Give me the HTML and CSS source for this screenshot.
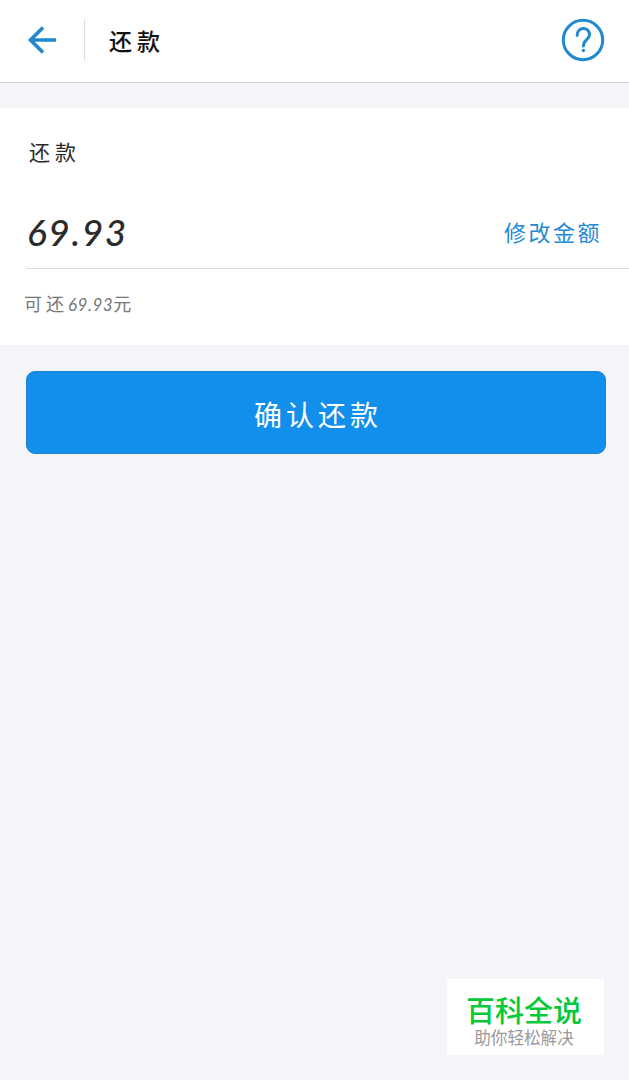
FILE: index.html
```html
<!DOCTYPE html>
<html lang="zh-CN">
<head>
<meta charset="utf-8">
<meta name="viewport" content="width=device-width, initial-scale=1">
<title>还款</title>
<link rel="stylesheet" href="styles.css">
</head>
<body>

<div class="header">
  <a class="back" href="#">
    <svg width="30" height="30" viewBox="0 0 30 30">
      <path d="M16 2.5 L3.5 15 L16 27.5 M3.5 15 H29"/>
    </svg>
  </a>
  <h1 class="title">还款</h1>
  <a class="help" href="#">
    <svg width="44" height="44" viewBox="0 0 44 44">
      <circle cx="22" cy="22" r="19.7"/>
      <path d="M16.2 17.4 C16 8.6 28.7 8.2 28.5 16.8 C28.2 22 22.4 21.5 22.4 28"/>
      <circle class="dot" cx="22.4" cy="32.5" r="1.7"/>
    </svg>
  </a>
</div>

<div class="card">
  <p class="label">还款</p>
  <div class="amount_row">
    <span class="amount">69.93</span>
    <a class="edit" href="#">修改金额</a>
  </div>
  <p class="hint"><span class="wide">可还</span><span class="num">69.93</span>元</p>
</div>

<button class="confirm_btn">确认还款</button>

<div class="badge">
  <div class="badge_name">百科全说</div>
  <div class="badge_text">助你轻松解决</div>
</div>

</body>
</html>
```
FILE: styles.css
```css
* {
    box-sizing: border-box;
}

body {
    margin: 0;
    min-height: 1080px;
    background-color: #f4f4f9;
    font-family: "Noto Sans CJK SC", sans-serif;
    color: #2b2b2b;
}

h1, p {
    margin: 0;
    font-weight: normal;
}

a {
    color: #2389d3;
    text-decoration: none;
}

svg {
    display: block;
    fill: none;
    stroke: #2389cf;
}

.header {
    display: flex;
    align-items: center;
    height: 83px;
    padding: 0 24px 3px 27px;
    border-bottom: 1px solid #d3d3d9;
    background-color: #fff;
}

.back {
    width: 58px;
    padding: 6px 0;
    border-right: 1px solid #dedede;
}

.back svg {
    stroke-width: 3.6;
}

.title {
    flex: 1;
    padding-left: 24px;
    font-size: 23px;
    font-weight: 500;
    line-height: 36px;
    letter-spacing: 5px;
    color: #111;
}

.help svg {
    stroke-width: 3;
    stroke-linecap: round;
}

.help .dot {
    fill: #2389cf;
    stroke: none;
}

.card {
    height: 237px;
    margin-top: 25px;
    padding: 25px 0 0 26px;
    background-color: #fff;
}

.label {
    padding-left: 3px;
    font-size: 21px;
    line-height: 36px;
    letter-spacing: 5px;
}

.amount_row {
    display: flex;
    align-items: center;
    justify-content: space-between;
    height: 100px;
    padding: 26px 25px 0 0;
    border-bottom: 1px solid #dcdcdc;
}

.amount {
    padding-left: 1px;
    font: italic 500 37px/40px Lato, sans-serif;
    letter-spacing: 1.6px;
}

.edit {
    padding-bottom: 2px;
    font-size: 22px;
    line-height: 36px;
    letter-spacing: 2.5px;
    margin-right: 2px;
}

.hint {
    margin-top: 20px;
    margin-left: -2px;
    font-size: 18px;
    line-height: 28px;
    color: #777;
}

.wide {
    letter-spacing: 4px;
}

.num {
    font: italic 17px Lato, sans-serif;
    letter-spacing: 0.5px;
}

.confirm_btn {
    display: block;
    width: 580px;
    height: 83px;
    margin: 26px 0 0 26px;
    padding: 2px 0 0 4px;
    border: 1px solid #2182cf;
    border-radius: 9px;
    background-color: #128eeb;
    font-family: inherit;
    font-size: 28px;
    letter-spacing: 4px;
    color: #fff;
}

/* floats over the page corner */
.badge {
    position: absolute;
    top: 979px;
    left: 447px;
    width: 157px;
    height: 76px;
    padding-top: 13px;
    background-color: #fff;
    text-align: center;
}

.badge_name {
    padding-right: 3px;
    font-size: 29px;
    font-weight: 500;
    line-height: 34px;
    color: #05c93b;
}

.badge_text {
    padding-right: 3px;
    font-size: 16.6px;
    line-height: 22px;
    color: #999;
}
```
